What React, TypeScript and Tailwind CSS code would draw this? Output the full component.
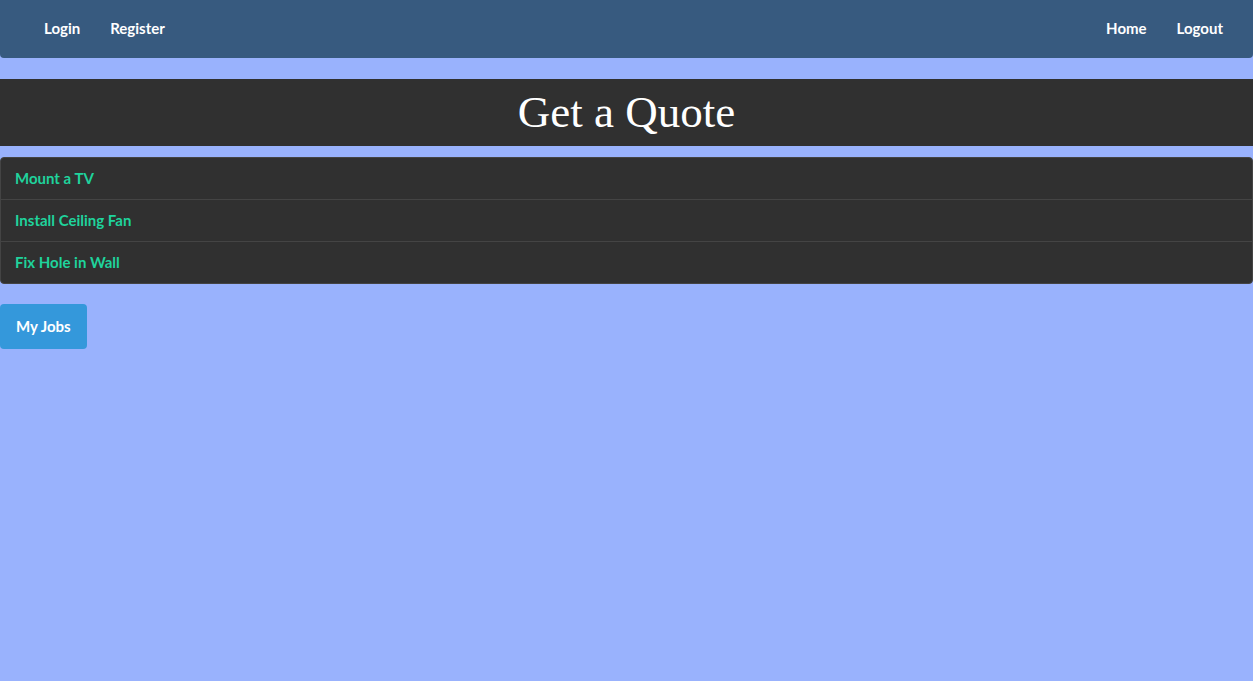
export default function App() {
  const jobs = ["Mount a TV", "Install Ceiling Fan", "Fix Hole in Wall"];
  return (
    <div className="min-h-[681px] bg-[#99b2fd] font-['Lato','Noto_Sans',sans-serif] text-[15px]">
      {/* Navbar */}
      <nav className="h-[58px] pb-[2px] bg-[#375a7f] rounded-b-[4px] flex items-center justify-between pl-[29px] pr-[15px]">
        <div className="flex">
          {["Login", "Register"].map((l) => (
            <a key={l} className="px-[15px] text-white font-bold cursor-pointer">{l}</a>
          ))}
        </div>
        <div className="flex">
          {["Home", "Logout"].map((l) => (
            <a key={l} className="px-[15px] text-white font-bold cursor-pointer">{l}</a>
          ))}
        </div>
      </nav>

      {/* Title bar */}
      <div className="mt-[21px] h-[67px] bg-[#303030] flex items-center justify-center">
        <h1 className="text-white text-[45px] leading-none font-['Liberation_Serif','Times_New_Roman',serif] pb-[1px]">
          Get a Quote
        </h1>
      </div>

      {/* Job list */}
      <div className="mt-[11px] bg-[#303030] border border-[#444] rounded-[4px]">
        {jobs.map((j, i) => (
          <div
            key={j}
            className={`box-content h-[41px] flex items-center px-[14px] ${i > 0 ? "border-t border-[#444]" : ""}`}
          >
            <a className="text-[#1fd39c] font-bold cursor-pointer">{j}</a>
          </div>
        ))}
      </div>

      <button className="mt-[20px] h-[45px] px-[16px] bg-[#3498db] text-white font-bold rounded-[4px]">
        My Jobs
      </button>
    </div>
  );
}
